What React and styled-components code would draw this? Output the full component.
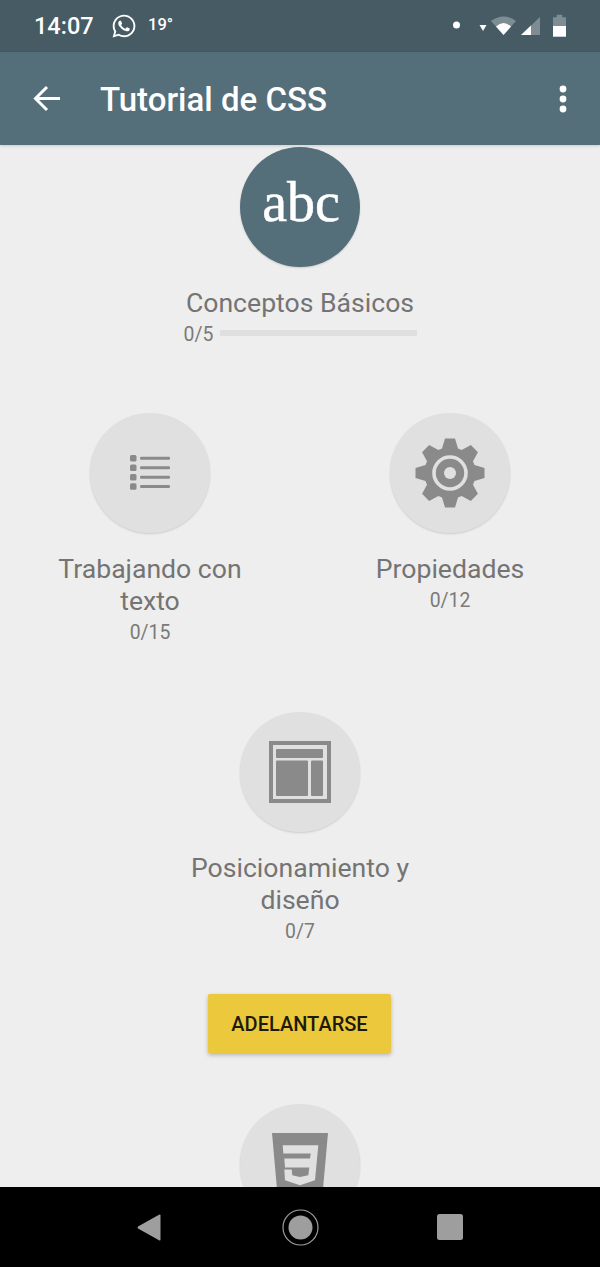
import React from "react";
import styled, { createGlobalStyle } from "styled-components";
import { FaWhatsapp } from "react-icons/fa";

const Global = createGlobalStyle`
  html, body { margin: 0; padding: 0; height: 100%; background: #eeeeee; }
  * { box-sizing: border-box; }
  #root { height: 100%; }
`;

const Screen = styled.div`
  width: 600px;
  height: 1267px;
  display: flex;
  flex-direction: column;
  font-family: Roboto, "Liberation Sans", sans-serif;
  overflow: hidden;
`;

const StatusBar = styled.div`
  height: 52px;
  flex: none;
  background: #475b65;
  color: #fff;
  display: flex;
  align-items: center;
  padding: 0 34px;
`;

const Time = styled.span`
  font-size: 23.5px;
  font-weight: 500;
  width: 77px;
`;

const Temp = styled.span`
  font-size: 16.5px;
  font-weight: 500;
  margin-left: 11px;
  margin-top: -3px;
`;

const StatusRight = styled.div`
  margin-left: auto;
  display: flex;
  align-items: center;
`;

const AppBar = styled.header`
  height: 93px;
  flex: none;
  background: #546e7a;
  color: #fff;
  display: flex;
  align-items: center;
  padding: 0 33px;
  position: relative;
  z-index: 1;
  box-shadow: 0 1px 3px rgba(0, 0, 0, 0.15);
`;

const Title = styled.h1`
  margin: 1px 0 0 40px;
  font-size: 33px;
  font-weight: 500;
  flex: 1;
`;

const Content = styled.main`
  flex: 1;
  min-height: 0;
  overflow: hidden;
  background: #eeeeee;
  display: flex;
  flex-direction: column;
  align-items: center;
  padding-top: 2px;
`;

const Row = styled.div`
  width: 600px;
  display: flex;
  margin-top: ${(p) => p.$top}px;
`;

const Node = styled.div`
  flex: 1;
  display: flex;
  flex-direction: column;
  align-items: center;
  text-align: center;
`;

const Circle = styled.div`
  width: 120px;
  height: 120px;
  flex: none;
  border-radius: 50%;
  background: ${(p) => (p.$active ? "#546e7a" : "#e0e0e0")};
  box-shadow: 0 1px 2px rgba(0, 0, 0, 0.14);
  display: flex;
  align-items: center;
  justify-content: center;
`;

const Abc = styled.span`
  font-family: "Liberation Serif", serif;
  font-size: 56px;
  color: #fff;
  line-height: 1;
  margin: -11px 0 0 2px;
  -webkit-text-stroke: 0.5px #fff;
`;

const Label = styled.div`
  font-size: 26.6px;
  line-height: 32px;
  color: #747474;
  margin-top: 20px;
  width: 240px;
`;

const Count = styled.div`
  font-size: 19.4px;
  line-height: 32px;
  color: #7a7a7a;
`;

const ProgressRow = styled.div`
  display: flex;
  align-items: center;
  gap: 7px;
  width: 233px;
  height: 32px;
`;

const Track = styled.div`
  flex: 1;
  height: 6px;
  margin-top: -4px;
  background: #dfdfdf;
`;

const Button = styled.button`
  margin: 46px 1px 0 0;
  width: 183px;
  height: 59px;
  flex: none;
  border: 0;
  border-radius: 2px;
  background: #ebc83c;
  color: #1e1a08;
  font-family: inherit;
  font-size: 20px;
  font-weight: 500;
  box-shadow: 0 2px 4px rgba(0, 0, 0, 0.25);
`;

const CssNode = styled.div`
  margin-top: 51px;
  flex: none;
`;

const NavBar = styled.nav`
  height: 80px;
  flex: none;
  background: #000;
  display: flex;
  align-items: center;
  justify-content: center;
  position: relative;
  z-index: 1;
`;

const NavSlot = styled.div`
  width: 150px;
  display: flex;
  justify-content: center;
`;

const Whats = styled(FaWhatsapp)`
  width: 26px;
  height: 26px;
`;

const ShiftedBack = styled.svg`
  margin-right: 2px;
`;

const CssSvg = styled.svg`
  margin-top: 3px;
`;

function gearPoints() {
  const pts = [];
  const cx = 40, cy = 40;
  for (let i = 0; i < 8; i++) {
    const a = (i * Math.PI) / 4;
    const p = (u, v) => {
      const x = cx + u * Math.cos(a) - v * Math.sin(a);
      const y = cy + u * Math.sin(a) + v * Math.cos(a);
      return `${x.toFixed(2)},${y.toFixed(2)}`;
    };
    pts.push(p(-8, -24.5), p(-5, -34.5), p(5, -34.5), p(8, -24.5));
  }
  return pts.join(" ");
}

const Gear = () => (
  <svg width="80" height="80" viewBox="0 0 80 80">
    <polygon points={gearPoints()} fill="#8a8a8a" />
    <circle cx="40" cy="40" r="16" fill="none" stroke="#e0e0e0" strokeWidth="3.6" />
    <circle cx="40" cy="40" r="6" fill="#e0e0e0" />
  </svg>
);

const ListIcon = () => (
  <svg width="40" height="36" viewBox="0 0 40 36" fill="#8a8a8a">
    {[0, 9.5, 19, 28.3].map((y) => (
      <g key={y}>
        <rect x="0" y={y} width="6.5" height="6.5" rx="1.5" />
        <rect x="10" y={y + 1.7} width="30" height="3" rx="1.2" />
      </g>
    ))}
  </svg>
);

const LayoutIcon = () => (
  <svg width="62" height="62" viewBox="0 0 62 62" fill="#8a8a8a">
    <path fillRule="evenodd" d="M0 0H62V62H0ZM4 4V58H58V4Z" />
    <rect x="7" y="8" width="47" height="9" rx="1" />
    <rect x="7" y="19.5" width="32" height="35.5" rx="1" />
    <rect x="42" y="19.5" width="12" height="35.5" rx="1" />
  </svg>
);

const CssIcon = () => (
  <CssSvg width="56" height="66" viewBox="0 0 56 66">
    <path d="M0 0H56L51 56L28 65L5 56Z" fill="#8a8a8a" />
    <path
      d="M10.7 12.3H46.3L43 47.3L28 52.3L13 47.3L12.3 36.6H19.7L20.3 42.3L28 44L36.3 42.3L37.3 34.6H13L12.3 25.6H38L38.7 20.6H11.3Z"
      fill="#e0e0e0"
    />
  </CssSvg>
);

const Arrow = () => (
  <svg width="27" height="27" viewBox="0 0 27 27" fill="none" stroke="#fff" strokeWidth="3">
    <path d="M27 13.5H3M14 2L2.5 13.5L14 25" />
  </svg>
);

const Dots = () => (
  <svg width="8" height="28" viewBox="0 0 8 28" fill="#fff">
    <circle cx="4" cy="4" r="3.4" />
    <circle cx="4" cy="14" r="3.4" />
    <circle cx="4" cy="24" r="3.4" />
  </svg>
);

const StatusIcons = () => (
  <svg width="113" height="24" viewBox="0 0 113 24">
    <circle cx="3.5" cy="11" r="3.5" fill="#fff" />
    <path d="M26.5 11H33.5L30 17Z" fill="#fff" />
    <path d="M38 7Q50.5 -2 63 7L50.5 21Z" fill="#fff" fillOpacity="0.3" />
    <path d="M43 12.5Q50.5 5.5 58 12.5L50.5 21Z" fill="#fff" />
    <path d="M68 21L87 3V21Z" fill="#fff" fillOpacity="0.3" />
    <path d="M68 21L78 11.5V21Z" fill="#fff" />
    <path d="M103.7 3.3V0.7H109.3V3.3H113V12H100V3.3Z" fill="#fff" fillOpacity="0.3" />
    <path d="M100 12H113V22.7H100Z" fill="#fff" />
  </svg>
);

const NavBack = () => (
  <ShiftedBack width="24" height="27" viewBox="0 0 24 27" fill="#9e9e9e">
    <path d="M23.5 1.5V25.5Q23.5 26.8 22 26.2L1 14.5Q0 13.5 1 12.5L22 0.7Q23.5 0.2 23.5 1.5Z" />
  </ShiftedBack>
);

const NavHome = () => (
  <svg width="37" height="37" viewBox="0 0 37 37" fill="#9e9e9e">
    <circle cx="18.5" cy="18.5" r="17.5" fill="none" stroke="#9e9e9e" strokeWidth="1.2" />
    <circle cx="18.5" cy="18.5" r="12" />
  </svg>
);

const NavRecent = () => (
  <svg width="26" height="26" viewBox="0 0 26 26" fill="#9e9e9e">
    <rect width="26" height="26" rx="2.5" />
  </svg>
);

export default function App() {
  return (
    <Screen>
      <Global />
      <StatusBar>
        <Time>14:07</Time>
        <Whats />
        <Temp>19°</Temp>
        <StatusRight>
          <StatusIcons />
        </StatusRight>
      </StatusBar>
      <AppBar>
        <Arrow />
        <Title>Tutorial de CSS</Title>
        <Dots />
      </AppBar>
      <Content>
        <Node>
          <Circle $active>
            <Abc>abc</Abc>
          </Circle>
          <Label>Conceptos Básicos</Label>
          <ProgressRow>
            <Count>0/5</Count>
            <Track />
          </ProgressRow>
        </Node>
        <Row $top={62}>
          <Node>
            <Circle>
              <ListIcon />
            </Circle>
            <Label>Trabajando con texto</Label>
            <Count>0/15</Count>
          </Node>
          <Node>
            <Circle>
              <Gear />
            </Circle>
            <Label>Propiedades</Label>
            <Count>0/12</Count>
          </Node>
        </Row>
        <Row $top={63}>
          <Node>
            <Circle>
              <LayoutIcon />
            </Circle>
            <Label>Posicionamiento y diseño</Label>
            <Count>0/7</Count>
          </Node>
        </Row>
        <Button>ADELANTARSE</Button>
        <CssNode>
          <Circle>
            <CssIcon />
          </Circle>
        </CssNode>
      </Content>
      <NavBar>
        <NavSlot><NavBack /></NavSlot>
        <NavSlot><NavHome /></NavSlot>
        <NavSlot><NavRecent /></NavSlot>
      </NavBar>
    </Screen>
  );
}
